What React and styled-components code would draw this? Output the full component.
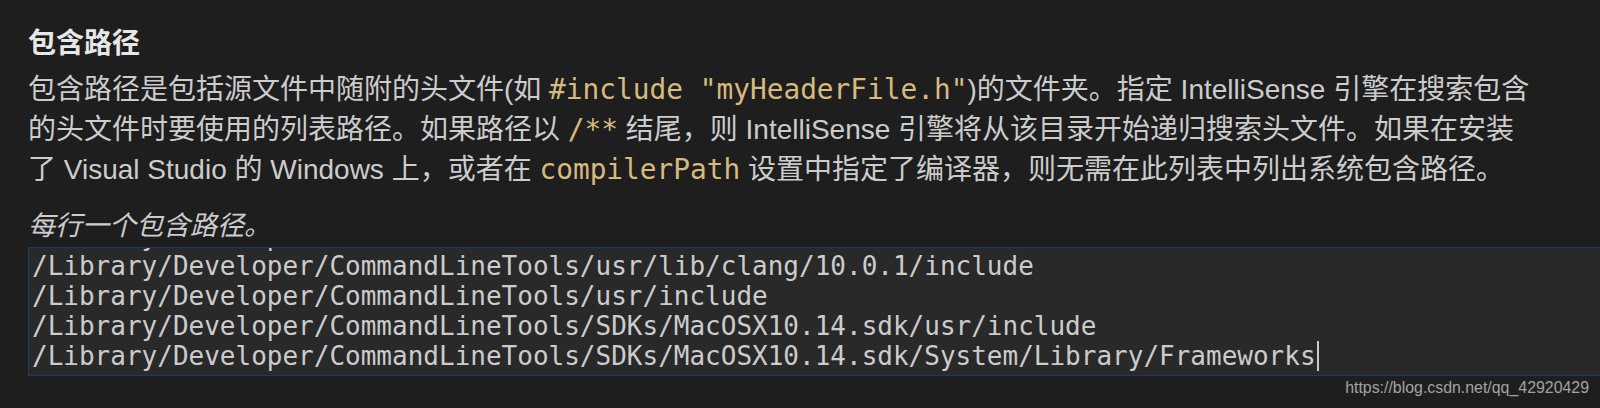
import React, { useEffect, useRef } from "react";
import styled, { createGlobalStyle } from "styled-components";

const GlobalStyle = createGlobalStyle`
	html, body {
		margin: 0;
		padding: 0;
		background: #1e1e1e;
		overflow: hidden;
	}
`;

const Page = styled.section`
	width: 1600px;
	height: 408px;
	padding: 24px 0 0 28px;
	box-sizing: border-box;
	background: #1e1e1e;
	color: #cccccc;
	font-family: "Liberation Sans", "Noto Sans CJK SC", sans-serif;
	font-size: 28px;
	line-height: 40px;
	display: flex;
	flex-direction: column;
`;
const Title = styled.h2`
	margin: 0;
	font-size: 28px;
	font-weight: 600;
	color: #e7e7e7;
	line-height: 40px;
`;
const Desc = styled.p`
	margin: 6px 0 0 0;
	white-space: nowrap;
`;
const Code = styled.code`
	font-family: "DejaVu Sans Mono", monospace;
	font-size: 27.8px;
	color: #d7ba7d;
`;
const Hint = styled.p`
	margin: 16px 0 0 0;
	font-style: italic;
	font-size: 27px;
	line-height: 40px;
	color: #cccccc;
`;
const EditBox = styled.div`
	margin-top: 1px;
	border: 1px solid #1d3b61;
	border-right: none;
	background: #292929;
	height: 127px;
	overflow: hidden;
`;
const Lines = styled.div`
	padding-bottom: 10px;
`;
const Line = styled.div`
	padding-left: 3px;
	font-family: "DejaVu Sans Mono", monospace;
	font-size: 26px;
	line-height: 30px;
	color: #cccccc;
	white-space: pre;
`;
const Caret = styled.span`
	display: inline-block;
	width: 2px;
	height: 30px;
	margin-left: 1px;
	vertical-align: top;
	background: #c8c8c8;
`;
const Mark = styled.div`
	align-self: flex-end;
	margin-top: 3px;
	padding-right: 11px;
	font-family: "Liberation Sans", sans-serif;
	font-size: 15.9px;
	line-height: 18px;
	color: #a3a3a3;
`;

const paths = [
	"/Library/Developer/CommandLineTools/usr/include/c++/v1",
	"/Library/Developer/CommandLineTools/usr/lib/clang/10.0.1/include",
	"/Library/Developer/CommandLineTools/usr/include",
	"/Library/Developer/CommandLineTools/SDKs/MacOSX10.14.sdk/usr/include",
	"/Library/Developer/CommandLineTools/SDKs/MacOSX10.14.sdk/System/Library/Frameworks",
];

function IncludePath() {
	const boxRef = useRef(null);

	// textarea is scrolled a little, first line only shows its descenders
	useEffect(() => {
		if (boxRef.current) boxRef.current.scrollTop = 27;
	}, []);

	return (
		<Page>
			<Title>包含路径</Title>
			<Desc>
				包含路径是包括源文件中随附的头文件(如 <Code>#include "myHeaderFile.h"</Code>)的文件夹。指定 IntelliSense 引擎在搜索包含
				<br />
				的头文件时要使用的列表路径。如果路径以 <Code>/**</Code> 结尾，则 IntelliSense 引擎将从该目录开始递归搜索头文件。如果在安装
				<br />
				了 Visual Studio 的 Windows 上，或者在 <Code>compilerPath</Code> 设置中指定了编译器，则无需在此列表中列出系统包含路径。
			</Desc>
			<Hint>每行一个包含路径。</Hint>
			<EditBox ref={boxRef}>
				<Lines>
					{paths.map((p, i) => (
						<Line key={i}>
							{p}
							{i === paths.length - 1 && <Caret />}
						</Line>
					))}
				</Lines>
			</EditBox>
			<Mark>https://blog.csdn.net/qq_42920429</Mark>
		</Page>
	);
}

export default function App() {
	return (
		<>
			<GlobalStyle />
			<IncludePath />
		</>
	);
}
